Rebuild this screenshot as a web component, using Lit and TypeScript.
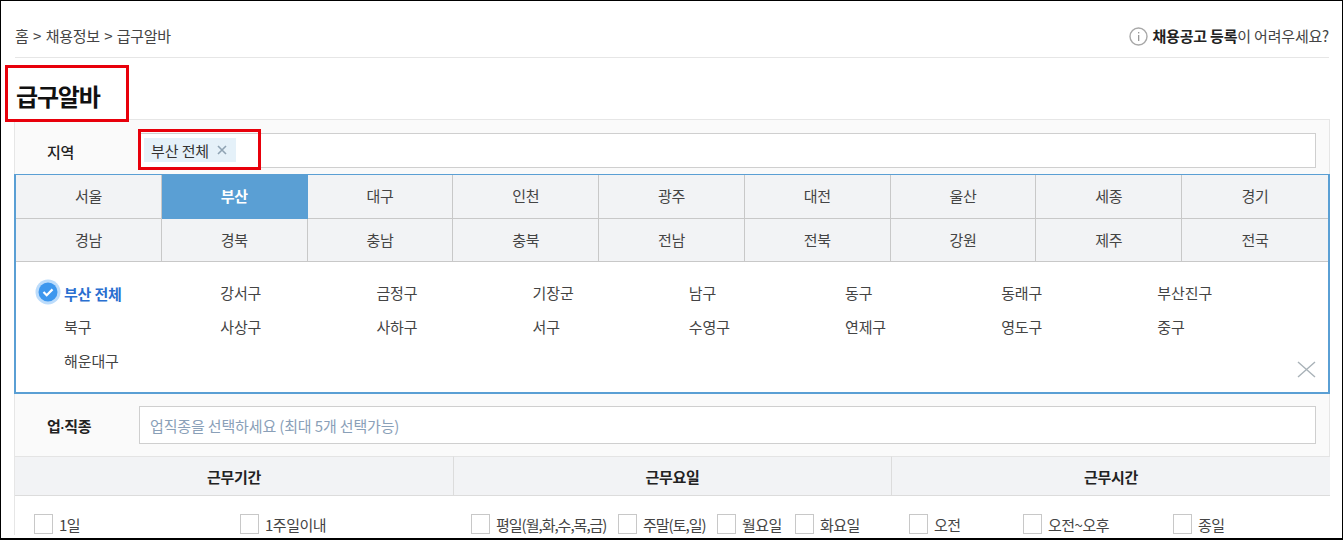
import { LitElement, html, css, svg } from "lit";
import { customElement } from "lit/decorators.js";

const R1 = ["서울","부산","대구","인천","광주","대전","울산","세종","경기"];
const R2 = ["경남","경북","충남","충북","전남","전북","강원","제주","전국"];
const D = ["부산 전체","강서구","금정구","기장군","남구","동구","동래구","부산진구","북구","사상구","사하구","서구","수영구","연제구","영도구","중구","해운대구"];
const COLS = [
  { t: "근무기간", cls: "c1", items: ["1일","1주일이내"] },
  { t: "근무요일", cls: "c2", items: ["평일(월,화,수,목,금)","주말(토,일)","월요일","화요일"] },
  { t: "근무시간", cls: "c3", items: ["오전","오전~오후","종일"] },
];

@customElement("app-root")
export class AppRoot extends LitElement {
  static styles = css`
    :host { display: block; width: 1343px; height: 540px; overflow: hidden; background: #fff; font-family: "Noto Sans CJK KR", "Liberation Sans", sans-serif; color: #333; }
    .frame { box-sizing: border-box; width: 1343px; height: 540px; border: 1px solid #000; border-bottom-width: 2px; padding: 0 13px 0 14px; overflow: hidden; }
    .top { height: 57px; box-sizing: border-box; border-bottom: 1px solid #e6e6e6; display: flex; justify-content: space-between; align-items: center; padding-top: 12px; }
    .crumb { font-size: 15px; letter-spacing: -0.3px; word-spacing: 1.5px; color: #444; }
    .help { display: flex; align-items: center; gap: 5px; font-size: 15px; letter-spacing: -0.2px; color: #444; }
    .help svg { margin-top: 2px; }
    .help b { color: #222; }
    .title-wrap { position: relative; height: 62px; }
    h1 { margin: 0; padding-top: 19px; padding-left: 1px; font-size: 24px; line-height: 38px; letter-spacing: -1.2px; color: #111; font-weight: 700; }
    .redbox { position: absolute; border: 3px solid #e8000b; box-sizing: border-box; pointer-events: none; }
    .rb1 { left: -10px; top: 7px; width: 124px; height: 57px; }
    .panel { box-sizing: border-box; width: 1316px; border: 1px solid #e6e6e6; border-bottom: none; background: #fafafa; margin-top: -1px; margin-left: -1px; }
    .row { display: flex; align-items: center; }
    .r1 { height: 54px; padding-top: 6px; box-sizing: border-box; position: relative; }
    .r2 { height: 62px; box-sizing: border-box; }
    .lab { width: 124px; padding-left: 32px; box-sizing: border-box; font-size: 15px; font-weight: 700; letter-spacing: -0.4px; color: #222; }
    .lab.thin { font-weight: 500; padding-top: 2px; }
    .dot { font-family: "Liberation Sans", sans-serif; font-size: 13px; }
    .input { width: 1177px; box-sizing: border-box; background: #fff; border: 1px solid #cfcfcf; display: flex; align-items: center; }
    .r1 .input { height: 35px; padding-left: 4px; }
    .r2 .input { height: 38px; padding-left: 10px; font-size: 15px; color: #8aa0b8; letter-spacing: -0.15px; }
    .tag { background: #e5f1f9; height: 24px; display: flex; align-items: center; padding: 0 9px 0 7px; gap: 8px; font-size: 15px; letter-spacing: -0.1px; color: #333; }
    .rb2 { left: 123px; top: 9px; width: 123px; height: 41px; }
    .region { box-sizing: border-box; margin-left: -1px; width: 1316px; height: 220px; border: 2px solid #5a9fd4; border-top-width: 1px; background: #fff; position: relative; }
    .tabs { display: grid; grid-template-columns: repeat(9, 1fr); }
    .tab { height: 43.5px; box-sizing: border-box; padding-bottom: 1px; display: flex; align-items: center; justify-content: center; background: #f2f3f5; border-right: 1px solid #c8c8c8; border-bottom: 1px solid #c8c8c8; font-size: 15px; color: #444; letter-spacing: -0.3px; }
    .tab:nth-child(9n) { border-right: none; }
    .tab.on { background: #5a9fd4; color: #fff; font-weight: 700; border-color: #5a9fd4; }
    .dist { display: grid; grid-template-columns: repeat(8, 156.2px); grid-auto-rows: 34px; padding: 13px 0 0 48px; }
    .d { font-size: 15px; letter-spacing: -0.1px; color: #444; display: flex; align-items: center; position: relative; height: 34px; box-sizing: border-box; }
    .d.on { color: #2a6fd0; font-weight: 700; letter-spacing: -0.2px; padding-top: 3px; }
    .chk { position: absolute; left: -29px; top: 4px; }
    .close { position: absolute; right: 12px; bottom: 14px; display: block; }
    .tbl { display: grid; grid-template-columns: 439px 438px 438px; width: 1315px; }
    .th { height: 40px; box-sizing: border-box; background: #f2f3f5; border-top: 1px solid #e4e4e4; border-bottom: 1px solid #dcdcdc; border-right: 1px solid #dcdcdc; display: flex; align-items: center; justify-content: center; font-size: 15px; font-weight: 700; letter-spacing: -0.3px; color: #222; }
    .th:nth-child(3) { border-right: none; }
    .td { background: #fff; display: flex; align-items: flex-start; padding-top: 18px; height: 39px; box-sizing: border-box; overflow: visible; }
    .c1 { padding-left: 19px; }
    .c2 { padding-left: 17px; }
    .c3 { padding-left: 17px; }
    .opt { display: flex; align-items: center; font-size: 15px; letter-spacing: -0.5px; color: #444; height: 20px; }
    .box { width: 17px; height: 18px; border: 1px solid #c8c8c8; background: #fff; margin-right: 6px; flex: none; }
    .c1 .opt:nth-child(1) { width: 206px; }
    .c2 .opt:nth-child(1) { width: 147px; letter-spacing: -1px; }
    .c2 .opt:nth-child(2) { width: 99px; letter-spacing: -1px; }
    .c2 .opt:nth-child(3) { width: 78px; }
    .c3 .opt:nth-child(1) { width: 114px; }
    .c3 .opt:nth-child(2) { width: 150px; }
  `;

  render() {
    return html`<div class="frame">
      <div class="top">
        <div class="crumb">홈 &gt; 채용정보 &gt; 급구알바</div>
        <div class="help">
          <svg width="19" height="19" viewBox="0 0 19 19"><circle cx="9.5" cy="9.5" r="8.5" fill="none" stroke="#a8a8a8" stroke-width="1.4"/><rect x="9" y="8" width="1.3" height="6" fill="#999"/><rect x="9" y="5" width="1.3" height="1.4" fill="#999"/></svg>
          <span><b>채용공고 등록</b>이 어려우세요?</span>
        </div>
      </div>
      <div class="title-wrap"><h1>급구알바</h1><div class="redbox rb1"></div></div>
      <div class="panel">
        <div class="row r1">
          <div class="lab thin">지역</div>
          <div class="input"><div class="tag">부산 전체
            <svg width="10" height="10" viewBox="0 0 10 10"><path d="M1 1L9 9M9 1L1 9" stroke="#8fa3b3" stroke-width="1.6"/></svg></div></div>
          <div class="redbox rb2"></div>
        </div>
        <div class="region">
          <div class="tabs">
            ${[...R1, ...R2].map(t => html`<div class="tab ${t === "부산" ? "on" : ""}">${t}</div>`)}
          </div>
          <div class="dist">
            ${D.map((t, i) => html`<div class="d ${i === 0 ? "on" : ""}">
              ${i === 0 ? html`<svg class="chk" width="26" height="26" viewBox="0 0 26 26"><circle cx="13" cy="13" r="12.5" fill="#bcdcfb"/><circle cx="13" cy="13" r="9.5" fill="#3d97ee"/>${svg`<path d="M8.5 13l3.2 3.2 5.8-5.8" fill="none" stroke="#fff" stroke-width="2.2"/>`}</svg>` : ""}
              ${t}</div>`)}
          </div>
          <svg class="close" width="19" height="17" viewBox="0 0 19 17"><path d="M1 1L18 16M18 1L1 16" stroke="#a9b2b8" stroke-width="1.4"/></svg>
        </div>
        <div class="row r2">
          <div class="lab">업<span class="dot">·</span>직종</div>
          <div class="input">업직종을 선택하세요 (최대 5개 선택가능)</div>
        </div>
        <div class="tbl">
          ${COLS.map(c => html`<div class="th">${c.t}</div>`)}
          ${COLS.map(c => html`<div class="td ${c.cls}">${c.items.map(i => html`<div class="opt"><span class="box"></span>${i}</div>`)}</div>`)}
        </div>
      </div>
    </div>`;
  }
}
